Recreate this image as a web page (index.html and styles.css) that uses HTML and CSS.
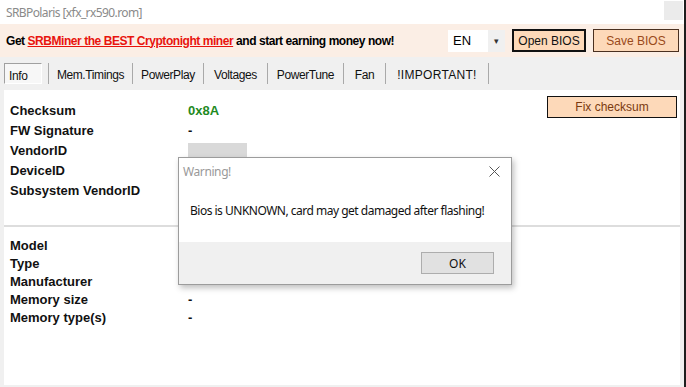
FILE: index.html
```html
<!DOCTYPE html>
<html lang="en">
<head>
    <meta charset="UTF-8">
    <title>SRBPolaris</title>
    <link rel="stylesheet" href="styles.css">
</head>
<body>
    <div class="window">
        <!-- Title bar -->
        <div class="titlebar">
            <span class="title">SRBPolaris [xfx_rx590.rom]</span>
            <span class="close-box"></span>
        </div>

        <!-- Ad banner + top buttons -->
        <div class="banner">
            <div class="promo">
                Get <a href="#" class="promo-link">SRBMiner the BEST Cryptonight miner</a> and start earning money now!
            </div>
            <div class="lang">
                <span class="lang-value">EN</span>
                <span class="lang-arrow">&#9662;</span>
            </div>
            <button class="btn btn-open">Open BIOS</button>
            <button class="btn btn-save">Save BIOS</button>
        </div>

        <!-- Tabs -->
        <div class="tabs">
            <div class="tab active">Info</div>
            <div class="tab tab-mem">Mem.Timings</div>
            <div class="tab tab-pp">PowerPlay</div>
            <div class="tab tab-volt">Voltages</div>
            <div class="tab tab-pt">PowerTune</div>
            <div class="tab tab-fan">Fan</div>
            <div class="tab tab-imp">!IMPORTANT!</div>
        </div>

        <!-- Info page -->
        <div class="content">
            <div class="group group-top">
                <div class="fields">
                    <div class="field"><span class="label">Checksum</span><span class="value ok">0x8A</span></div>
                    <div class="field"><span class="label">FW Signature</span><span class="value">-</span></div>
                    <div class="field"><span class="label">VendorID</span><span class="value"><span class="busy"></span></span></div>
                    <div class="field"><span class="label">DeviceID</span><span class="value"></span></div>
                    <div class="field"><span class="label">Subsystem VendorID</span><span class="value"></span></div>
                </div>
                <button class="btn btn-fix">Fix checksum</button>
            </div>

            <div class="divider"></div>

            <div class="group group-mem">
                <div class="fields">
                    <div class="field"><span class="label">Model</span><span class="value"></span></div>
                    <div class="field"><span class="label">Type</span><span class="value"></span></div>
                    <div class="field"><span class="label">Manufacturer</span><span class="value"></span></div>
                    <div class="field"><span class="label">Memory size</span><span class="value">-</span></div>
                    <div class="field"><span class="label">Memory type(s)</span><span class="value">-</span></div>
                </div>
            </div>

            <!-- Warning dialog -->
            <div class="dialog">
                <div class="dialog-head">
                    <span class="dialog-title">Warning!</span>
                    <svg class="dialog-close" width="11" height="11" viewBox="0 0 11 11">
                        <path d="M0.5 0.5 L10.5 10.5 M10.5 0.5 L0.5 10.5" stroke="#555" stroke-width="1" fill="none"/>
                    </svg>
                </div>
                <div class="dialog-body">Bios is UNKNOWN, card may get damaged after flashing!</div>
                <div class="dialog-foot">
                    <button class="ok-btn">OK</button>
                </div>
            </div>
        </div>
    </div>
</body>
</html>
```

FILE: styles.css
```css
body {
    margin: 0;
    padding: 0;
    background-color: #ffffff;
    font-family: "Liberation Sans", Arial, sans-serif;
    overflow: hidden;
}
.window {
    width: 684px;
    height: 387px;
    border-right: 2px solid #1e1e1e;
    display: flex;
    flex-direction: column;
    background-color: #f0f0f0;
}
.titlebar {
    height: 24px;
    background-color: #ffffff;
    display: flex;
    align-items: center;
    justify-content: space-between;
    padding-left: 6px;
}
.title {
    font-family: "Noto Sans", sans-serif;
    font-size: 12px;
    letter-spacing: -0.6px;
    color: #8a8a8a;
}
.close-box {
    width: 19px;
    height: 19px;
    margin-right: 1px;
    margin-top: -4px;
    background-color: #ebebeb;
}
.banner {
    height: 33px;
    background-color: #fbeee5;
    display: flex;
    align-items: center;
    padding-left: 6px;
}
.promo {
    font-size: 12px;
    font-weight: bold;
    letter-spacing: -0.45px;
    color: #000000;
    width: 442px;
    white-space: nowrap;
}
.promo-link {
    color: #e8140e;
}
.lang {
    width: 57px;
    height: 22px;
    background-color: #ffffff;
    display: flex;
    align-items: center;
    font-size: 13px;
    margin-right: 7px;
}
.lang-value {
    flex: 1;
    padding-left: 5px;
}
.lang-arrow {
    width: 17px;
    height: 22px;
    line-height: 22px;
    background-color: #f0f0f0;
    text-align: center;
    font-size: 9px;
    color: #333;
}
.btn {
    font-family: "Liberation Sans", Arial, sans-serif;
    font-size: 12px;
    background-color: #fdd9b9;
    padding: 0;
    cursor: pointer;
}
.btn-open {
    width: 74px;
    height: 23px;
    border: 2px solid #111111;
    color: #111111;
    margin-right: 7px;
}
.btn-save {
    width: 86px;
    height: 23px;
    border: 1px solid #4a3020;
    color: #9a4a1a;
}
.tabs {
    height: 33px;
    display: flex;
    align-items: center;
    padding-left: 4px;
    font-size: 12px;
    letter-spacing: -0.4px;
}
.tab {
    height: 21px;
    padding-top: 4px;
    line-height: 16px;
    text-align: center;
    border-right: 1px solid #a9a9a9;
    color: #111111;
    box-sizing: border-box;
}
.tab-mem { width: 84px; }
.tab-pp { width: 71px; }
.tab-volt { width: 64px; }
.tab-pt { width: 76px; }
.tab-fan { width: 42px; }
.tab-imp { width: 103px; letter-spacing: 0.3px; }
.tab.active {
    width: 38px;
    text-align: left;
    padding: 4px 0 0 4px;
    border: 1px solid #a0a0a0;
    border-right-color: #ffffff;
    border-bottom-color: #ffffff;
    background-color: #f7f7f7;
    margin-right: 7px;
    position: relative;
}
.tab.active::after {
    content: "";
    position: absolute;
    top: -1px;
    right: -8px;
    width: 1px;
    height: 21px;
    background-color: #a9a9a9;
}
.content {
    flex: 1;
    margin: 0 4px 2px 4px;
    background-color: #ffffff;
    position: relative;
}
.group {
    display: flex;
    justify-content: space-between;
}
.group-top {
    padding-top: 10px;
    height: 125px;
}
.group-mem {
    padding-top: 9px;
}
.fields {
    display: flex;
    flex-direction: column;
}
.field {
    display: flex;
    align-items: center;
    height: 20px;
    font-size: 13px;
}
.group-mem .field {
    height: 18px;
}
.label {
    width: 178px;
    padding-left: 6px;
    font-weight: bold;
    color: #111111;
}
.value {
    font-weight: bold;
    color: #111111;
}
.value.ok {
    color: #1f8a1f;
}
.busy {
    display: block;
    width: 59px;
    height: 20px;
    margin-top: 6px;
    background-color: #d9d9d9;
}
.btn-fix {
    width: 130px;
    height: 22px;
    margin: -4px 3px 0 0;
    border: 1px solid #111111;
    color: #7a3a10;
}
.divider {
    height: 2px;
    background-color: #dddddd;
}

/* warning message box */
.dialog {
    position: absolute;
    left: 174px;
    top: 67px;
    width: 332px;
    height: 126px;
    border: 1px solid #9c9c9c;
    background-color: #ffffff;
    box-shadow: 2px 3px 6px rgba(0, 0, 0, 0.25);
    display: flex;
    flex-direction: column;
    font-family: "Noto Sans", sans-serif;
}
.dialog-head {
    height: 26px;
    display: flex;
    align-items: center;
    justify-content: space-between;
    padding: 0 11px 0 4px;
}
.dialog-title {
    font-size: 12px;
    letter-spacing: -0.4px;
    color: #999999;
}
.dialog-body {
    height: 58px;
    padding-left: 11px;
    font-size: 12px;
    letter-spacing: -0.5px;
    color: #111111;
    line-height: 53px;
}
.dialog-foot {
    flex: 1;
    background-color: #f0f0f0;
    display: flex;
    justify-content: flex-end;
    align-items: center;
    padding-right: 17px;
}
.ok-btn {
    width: 73px;
    height: 22px;
    background-color: #e1e1e1;
    border: 1px solid #adadad;
    font-family: "Noto Sans", sans-serif;
    font-size: 12px;
    color: #111111;
    padding: 0;
}
```
